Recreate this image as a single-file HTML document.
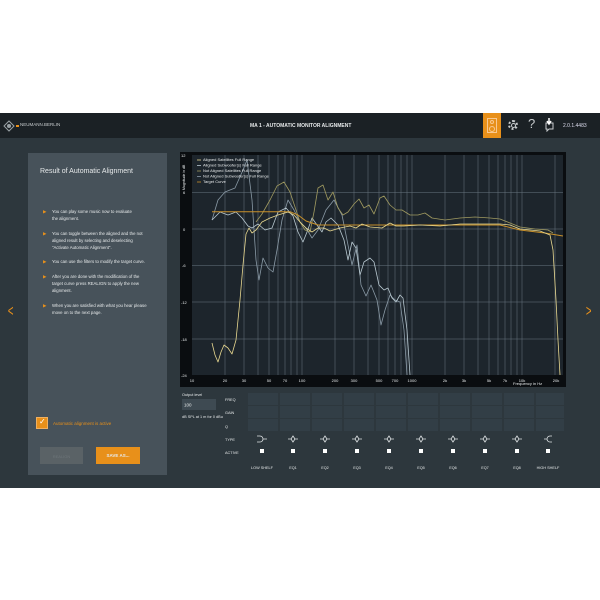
<!DOCTYPE html>
<html><head><meta charset="utf-8"><style>
*{margin:0;padding:0;box-sizing:border-box}
body{width:600px;height:600px;background:#fff;position:relative;overflow:hidden;font-family:"Liberation Sans",sans-serif}
.a{position:absolute}
.t{position:absolute;color:#e6e9ea;white-space:nowrap}
</style></head><body>
<div class="a" style="left:0;top:113px;width:600px;height:375px;background:#2d373d"></div>
<div class="a" style="left:0;top:113px;width:600px;height:25px;background:#1b2125"></div>
<svg class="a" style="left:3px;top:120px" width="12" height="12" viewBox="0 0 12 12"><path d="M6 1 L11 6 L6 11 L1 6Z" fill="none" stroke="#9aa2a6" stroke-width="1"/><circle cx="6" cy="6" r="2" fill="#9aa2a6"/></svg>
<div class="a" style="left:16px;top:125px;width:3px;height:1.5px;background:#e8901a"></div>
<div class="t" style="left:20px;top:122px;font-size:4.5px;color:#c8ccce">NEUMANN.BERLIN</div>
<div class="t" style="left:250px;top:123px;font-size:5px;width:100px;text-align:center;font-weight:bold">MA 1 - AUTOMATIC MONITOR ALIGNMENT</div>
<div class="a" style="left:483px;top:113px;width:18px;height:25px;background:#e8901a"></div>
<div class="a" style="left:487px;top:118px;width:10px;height:15px;border:1px solid #f8c890"></div>
<div class="a" style="left:490px;top:120px;width:4px;height:4px;border:1px solid #f8c890;border-radius:50%"></div>
<div class="a" style="left:489px;top:126px;width:6px;height:6px;border:1px solid #f8c890;border-radius:50%"></div>
<div class="a" style="left:508px;top:120px;width:10px;height:10px;border:2px dotted #c8ccce;border-radius:50%"></div>
<div class="a" style="left:510.5px;top:122.5px;width:5px;height:5px;border:1px solid #c8ccce;border-radius:50%"></div>
<div class="t" style="left:528px;top:116px;font-size:13px;color:#c8ccce">?</div>
<svg class="a" style="left:543px;top:117px" width="15" height="15" viewBox="0 0 15 15"><path d="M3 6 h7 v6 h-4 l-2 2 v-2 h-1z" fill="none" stroke="#c8ccce" stroke-width="1"/><path d="M6 1 v6 M4 4 l2 3 2-3" fill="none" stroke="#fff" stroke-width="1.5"/></svg>
<div class="t" style="left:563px;top:123px;font-size:5px;color:#dde">2.0.1.4483</div>
<div class="t" style="left:6px;top:303px;font-size:16px;color:#e8901a;transform:scaleX(.6)">&lt;</div>
<div class="t" style="left:584px;top:303px;font-size:16px;color:#e8901a;transform:scaleX(.6)">&gt;</div>

<div class="a" style="left:28px;top:153px;width:139px;height:322px;background:#47525a"></div>
<div class="t" style="left:40px;top:168px;font-size:7px">Result of Automatic Alignment</div>
<div style="position:absolute;left:43px;top:208px;width:120px;font-size:4.3px;line-height:7.3px;color:#e6e9ea">
<div style="position:relative;padding-left:9px;margin-bottom:7px"><span style="position:absolute;left:0;color:#e8901a">▶</span>You can play some music now to evaluate<br>the alignment.</div>
<div style="position:relative;padding-left:9px;margin-bottom:7px"><span style="position:absolute;left:0;color:#e8901a">▶</span>You can toggle between the aligned and the not<br>aligned result by selecting and deselecting<br>"Activate Automatic Alignment".</div>
<div style="position:relative;padding-left:9px;margin-bottom:7px"><span style="position:absolute;left:0;color:#e8901a">▶</span>You can use the filters to modify the target curve.</div>
<div style="position:relative;padding-left:9px;margin-bottom:7px"><span style="position:absolute;left:0;color:#e8901a">▶</span>After you are done with the modification of the<br>target curve press REALIGN to apply the new<br>alignment.</div>
<div style="position:relative;padding-left:9px"><span style="position:absolute;left:0;color:#e8901a">▶</span>When you are satisfied with what you hear please<br>move on to the next page.</div>
</div>
<div class="a" style="left:36px;top:417px;width:12px;height:12px;background:#e8901a;border:1px solid #f0b060"></div>
<div class="t" style="left:39px;top:417px;font-size:8px;color:#fff">✓</div>
<div class="t" style="left:53px;top:421px;font-size:4.5px;color:#e8901a">Automatic alignment is active</div>
<div class="a" style="left:40px;top:447px;width:43px;height:17px;background:#5a6266"></div>
<div class="t" style="left:40px;top:454px;width:43px;text-align:center;font-size:4px;color:#6e767a">REALIGN</div>
<div class="a" style="left:96px;top:447px;width:44px;height:17px;background:#e8901a"></div>
<div class="t" style="left:96px;top:453px;width:44px;text-align:center;font-size:4.5px;font-weight:bold">SAVE AS...</div>

<svg class="a" style="left:0;top:0" width="600" height="600">
<rect x="180" y="152" width="386" height="235" fill="#0a0d10"/>
<rect x="192" y="155" width="371" height="220" fill="#1d252c"/>
<g stroke="#6a7680" stroke-width="0.5">
<line x1="192" y1="192.7" x2="563" y2="192.7"/><line x1="192" y1="229" x2="563" y2="229"/><line x1="192" y1="265.7" x2="563" y2="265.7"/><line x1="192" y1="302" x2="563" y2="302"/><line x1="192" y1="339" x2="563" y2="339"/>
<line x1="225" y1="155" x2="225" y2="375"/><line x1="244" y1="155" x2="244" y2="375"/><line x1="258" y1="155" x2="258" y2="375"/><line x1="269" y1="155" x2="269" y2="375"/><line x1="278" y1="155" x2="278" y2="375"/><line x1="285" y1="155" x2="285" y2="375"/><line x1="291" y1="155" x2="291" y2="375"/><line x1="297" y1="155" x2="297" y2="375"/><line x1="302" y1="155" x2="302" y2="375"/>
<line x1="335" y1="155" x2="335" y2="375"/><line x1="354" y1="155" x2="354" y2="375"/><line x1="368" y1="155" x2="368" y2="375"/><line x1="379" y1="155" x2="379" y2="375"/><line x1="388" y1="155" x2="388" y2="375"/><line x1="395" y1="155" x2="395" y2="375"/><line x1="401" y1="155" x2="401" y2="375"/><line x1="407" y1="155" x2="407" y2="375"/><line x1="412" y1="155" x2="412" y2="375"/>
<line x1="445" y1="155" x2="445" y2="375"/><line x1="464" y1="155" x2="464" y2="375"/><line x1="478" y1="155" x2="478" y2="375"/><line x1="489" y1="155" x2="489" y2="375"/><line x1="498" y1="155" x2="498" y2="375"/><line x1="505" y1="155" x2="505" y2="375"/><line x1="511" y1="155" x2="511" y2="375"/><line x1="517" y1="155" x2="517" y2="375"/><line x1="522" y1="155" x2="522" y2="375"/><line x1="555" y1="155" x2="555" y2="375"/>
</g>
<g fill="none" stroke-width="0.8" stroke-linejoin="round">
<path stroke="#8a9aa6" d="M212 220 L218 200 L225 192 L235 188 L243 170 L247 160 L252 200 L256 260 L259 280 L263 258 L268 268 L273 272 L277 250 L282 220 L288 200 L294 210 L300 222 L306 228 L312 238 L318 230 L326 210 L334 200 L342 215 L348 245 L352 265 L357 245 L361 285 L366 296 L371 285 L377 300 L381 325 L385 310 L390 295 L395 300 L400 302 L404 330 L407 375"/>
<path stroke="#b8c8d0" d="M212 220 L220 212 L228 215 L236 212 L242 218 L248 226 L252 228 L258 224 L265 230 L272 228 L278 212 L286 208 L293 216 L298 232 L303 242 L307 232 L312 218 L317 225 L322 232 L326 222 L331 218 L338 225 L344 240 L348 260 L352 242 L356 248 L360 275 L364 262 L370 258 L374 262 L379 285 L384 290 L388 288 L392 298 L396 302 L400 295 L403 298 L407 330 L410 375"/>
<path stroke="#a09a60" d="M256 222 L262 214 L270 200 L277 186 L284 182 L290 192 L296 210 L300 222 L305 230 L310 232 L314 212 L318 188 L323 185 L328 200 L333 192 L338 208 L343 215 L348 212 L354 204 L359 199 L364 208 L369 205 L374 214 L380 198 L384 196 L390 205 L396 210 L402 210 L410 215 L418 215 L425 213 L432 218 L445 220 L460 218 L475 217 L490 218 L500 219 L510 223 L520 227 L535 229 L548 230 L553 233"/>
<path stroke="#c8902a" stroke-width="1" d="M212 211.7 L290 211.7 L298 215 L306 221 L318 225 L340 225 L380 225 L440 225 L480 225 L500 225 L520 230 L545 233 L563 236"/>
<path stroke="#e8d890" d="M212 343 L215 355 L218 362 L221 352 L224 345 L228 348 L232 354 L236 340 L240 300 L243 265 L246 234 L249 228 L252 233 L256 230 L262 222 L270 218 L278 215 L288 212 L294 215 L300 222 L306 228 L312 232 L318 228 L324 228 L330 231 L340 228 L350 226 L356 228 L362 224 L370 227 L382 228 L390 223 L396 226 L404 226 L420 225 L440 226 L460 224 L480 224 L500 224 L510 225 L520 229 L540 231 L550 235 L553 250 L556 300 L558 340 L560 375"/>
</g>
<g font-size="4" fill="#e6e9ea" font-family="Liberation Sans">
<text x="181" y="157">12</text><text x="183" y="194">6</text><text x="183" y="231">0</text><text x="182" y="267">-6</text><text x="181" y="304">-12</text><text x="181" y="341">-18</text><text x="181" y="377">-24</text>
<g text-anchor="middle"><text x="192" y="382">10</text><text x="225" y="382">20</text><text x="244" y="382">30</text><text x="269" y="382">50</text><text x="285" y="382">70</text><text x="302" y="382">100</text><text x="335" y="382">200</text><text x="354" y="382">300</text><text x="379" y="382">500</text><text x="395" y="382">700</text><text x="412" y="382">1000</text><text x="445" y="382">2k</text><text x="464" y="382">3k</text><text x="489" y="382">5k</text><text x="505" y="382">7k</text><text x="522" y="382">10k</text><text x="556" y="382">20k</text></g>
<text x="513" y="385">Frequency in Hz</text>
<text transform="translate(185,190) rotate(-90)" font-size="3.5">Magnitude in dB</text>
<text x="203" y="161">Aligned Satellites Full Range</text><text x="203" y="166.5">Aligned Subwoofer(s) Full Range</text><text x="203" y="172">Not Aligned Satellites Full Range</text><text x="203" y="177.5">Not Aligned Subwoofer(s) Full Range</text><text x="203" y="183">Target Curve</text>
</g>
<g stroke-width="0.8"><line x1="197" y1="160" x2="201" y2="160" stroke="#e8d890"/><line x1="197" y1="165.5" x2="201" y2="165.5" stroke="#b8c8d0"/><line x1="197" y1="171" x2="201" y2="171" stroke="#a09a60"/><line x1="197" y1="176.5" x2="201" y2="176.5" stroke="#8a9aa6"/><line x1="197" y1="182" x2="201" y2="182" stroke="#c8902a"/></g>
<g fill="#323e46">
<rect x="248" y="393" width="30" height="12"/><rect x="280" y="393" width="30" height="12"/><rect x="312" y="393" width="30" height="12"/><rect x="344" y="393" width="30" height="12"/><rect x="376" y="393" width="30" height="12"/><rect x="408" y="393" width="30" height="12"/><rect x="440" y="393" width="30" height="12"/><rect x="472" y="393" width="30" height="12"/><rect x="504" y="393" width="30" height="12"/><rect x="536" y="393" width="28" height="12"/>
<rect x="248" y="406" width="30" height="12"/><rect x="280" y="406" width="30" height="12"/><rect x="312" y="406" width="30" height="12"/><rect x="344" y="406" width="30" height="12"/><rect x="376" y="406" width="30" height="12"/><rect x="408" y="406" width="30" height="12"/><rect x="440" y="406" width="30" height="12"/><rect x="472" y="406" width="30" height="12"/><rect x="504" y="406" width="30" height="12"/><rect x="536" y="406" width="28" height="12"/>
<rect x="248" y="419" width="30" height="12"/><rect x="280" y="419" width="30" height="12"/><rect x="312" y="419" width="30" height="12"/><rect x="344" y="419" width="30" height="12"/><rect x="376" y="419" width="30" height="12"/><rect x="408" y="419" width="30" height="12"/><rect x="440" y="419" width="30" height="12"/><rect x="472" y="419" width="30" height="12"/><rect x="504" y="419" width="30" height="12"/><rect x="536" y="419" width="28" height="12"/>
</g>
<rect x="182" y="399" width="34" height="11" fill="#3e4a52"/>
<g font-size="3.8" fill="#e6e9ea" font-family="Liberation Sans">
<text x="182" y="396">Output level</text><text x="184" y="406.5" font-size="4.5">100</text><text x="182" y="418">dB SPL at 1 m for 0 dBu</text>
<text x="225" y="401">FREQ</text><text x="225" y="414">GAIN</text><text x="225" y="428">Q</text><text x="225" y="441">TYPE</text><text x="225" y="454">ACTIVE</text>
<g text-anchor="middle"><text x="262" y="469">LOW SHELF</text><text x="293" y="469">EQ1</text><text x="325" y="469">EQ2</text><text x="357" y="469">EQ3</text><text x="389" y="469">EQ4</text><text x="421" y="469">EQ5</text><text x="453" y="469">EQ6</text><text x="485" y="469">EQ7</text><text x="517" y="469">EQ8</text><text x="548" y="469">HIGH SHELF</text></g>
</g>
<g fill="#fff"><rect x="260" y="449" width="4" height="4"/><rect x="291" y="449" width="4" height="4"/><rect x="323" y="449" width="4" height="4"/><rect x="355" y="449" width="4" height="4"/><rect x="387" y="449" width="4" height="4"/><rect x="419" y="449" width="4" height="4"/><rect x="451" y="449" width="4" height="4"/><rect x="483" y="449" width="4" height="4"/><rect x="515" y="449" width="4" height="4"/><rect x="546" y="449" width="4" height="4"/></g>
<g fill="none" stroke="#dfe3e5" stroke-width="0.8">
<path d="M257 436 h3 a3 3 0 0 1 0 6 h-3 M263 439 h4"/>
<path d="M288 439 h3 l2 -3 l2 3 l-2 3 l-2 -3 M295 439 h3"/>
<path d="M320 439 h3 l2 -3 l2 3 l-2 3 l-2 -3 M327 439 h3"/>
<path d="M352 439 h3 l2 -3 l2 3 l-2 3 l-2 -3 M359 439 h3"/>
<path d="M384 439 h3 l2 -3 l2 3 l-2 3 l-2 -3 M391 439 h3"/>
<path d="M416 439 h3 l2 -3 l2 3 l-2 3 l-2 -3 M423 439 h3"/>
<path d="M448 439 h3 l2 -3 l2 3 l-2 3 l-2 -3 M455 439 h3"/>
<path d="M480 439 h3 l2 -3 l2 3 l-2 3 l-2 -3 M487 439 h3"/>
<path d="M512 439 h3 l2 -3 l2 3 l-2 3 l-2 -3 M519 439 h3"/>
<path d="M544 439 h3 M552 436 h-2 a3 3 0 0 0 0 6 h2"/>
</g>
</svg>
</body></html>
